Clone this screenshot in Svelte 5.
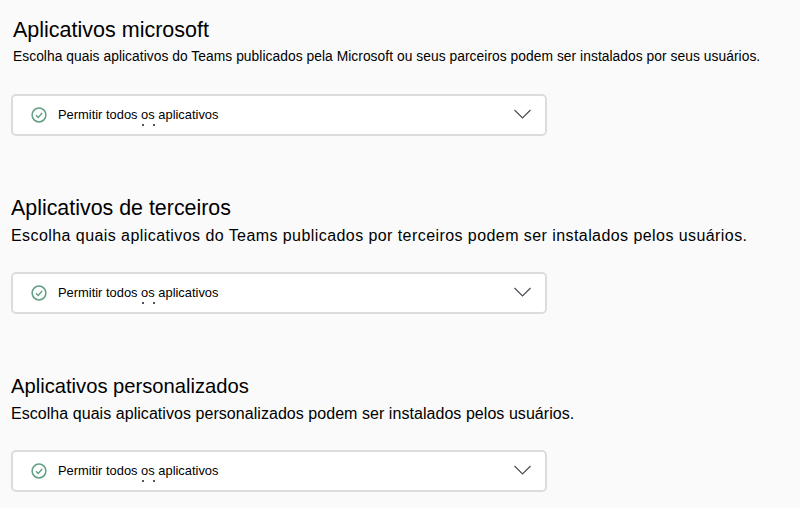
<script>
  const sections = [
    { title: 'Aplicativos microsoft', desc: 'Escolha quais aplicativos do Teams publicados pela Microsoft ou seus parceiros podem ser instalados por seus usuários.', cls: 'first' },
    { title: 'Aplicativos de terceiros', desc: 'Escolha quais aplicativos do Teams publicados por terceiros podem ser instalados pelos usuários.', cls: 'second' },
    { title: 'Aplicativos personalizados', desc: 'Escolha quais aplicativos personalizados podem ser instalados pelos usuários.', cls: 'third' }
  ];
</script>

<main class="page">
  {#each sections as s}
    <section class="section {s.cls}">
      <h2>{s.title}</h2>
      <p>{s.desc}</p>
      <div class="select">
        <svg class="check" width="16" height="16" viewBox="0 0 16 16" fill="none">
          <circle cx="8" cy="8" r="6.9" stroke="#609f82" stroke-width="1.5" />
          <path d="M5 8.2l2.2 2.2L11.2 6" stroke="#609f82" stroke-width="1.4" />
        </svg>
        <span class="label">Permitir todos os aplicativos</span>
        <span class="dots"><i></i><i></i></span>
        <svg class="chev" width="18" height="12" viewBox="0 0 18 12" fill="none">
          <path d="M1.5 1L9.5 9l8-8" stroke="#4a4f55" stroke-width="1.2" />
        </svg>
      </div>
    </section>
  {/each}
</main>

<style>
  :global(body) { margin: 0; background: #fafafa; }
  .page {
    width: 800px; height: 508px; overflow: hidden; box-sizing: border-box;
    background: #fafafa; color: #000;
    font-family: "Liberation Sans", sans-serif;
  }
  .section { display: flex; flex-direction: column; padding-left: 11px; }
  .first { padding-top: 18px; }
  .second { padding-top: 60px; }
  .third { padding-top: 60px; }
  h2 { margin: 0; font-weight: 400; font-size: 21.4px; line-height: 24px; }
  p { margin: 6px 0 0; font-size: 16px; line-height: 20px; }
  .first h2 { padding-left: 2px; font-size: 21.5px; }
  .first p { font-size: 13.8px; padding-left: 2px; letter-spacing: 0.05px; margin-top: 5px; }
  .second p { letter-spacing: 0.43px; }
  .third h2 { font-size: 20.2px; }
  .third p { letter-spacing: 0.05px; }
  .select {
    position: relative; display: flex; align-items: center;
    width: 536px; height: 42px; box-sizing: border-box; margin-top: 26px;
    background: #fff; border: 2px solid #dcdcdc; border-radius: 5px;
    padding: 0 14px 0 18px;
  }
  .first .select { margin-top: 27px; }
  .label { margin-left: 11px; padding-bottom: 2px; font-size: 12.9px; }
  .check { flex: none; }
  .chev { flex: none; margin-left: auto; }
  .dots { position: absolute; left: 129px; top: 28px; display: flex; gap: 9px; }
  .dots i { display: block; width: 2px; height: 2px; background: #555; }
</style>
